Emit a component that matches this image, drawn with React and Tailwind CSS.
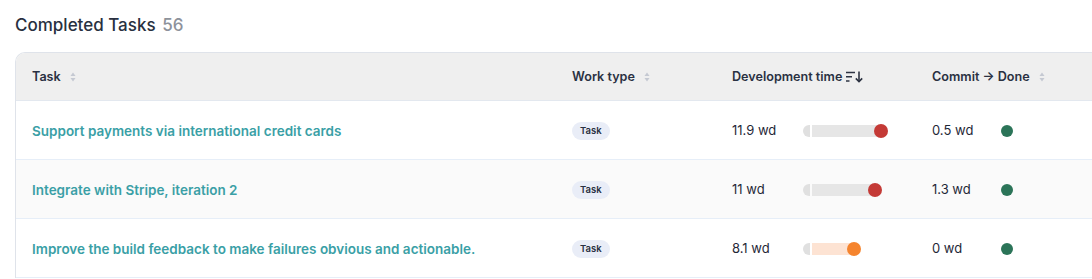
import React from 'react';

const rows = [
  { name: 'Support payments via international credit cards', dev: '11.9 wd', bar: 69, tone: 'red', commit: '0.5 wd', bg: 'bg-white' },
  { name: 'Integrate with Stripe, iteration 2', dev: '11 wd', bar: 63, tone: 'red', commit: '1.3 wd', bg: 'bg-[#fafafa]' },
  { name: 'Improve the build feedback to make failures obvious and actionable.', dev: '8.1 wd', bar: 42, tone: 'orange', commit: '0 wd', bg: 'bg-white' },
];

const SortIcon = () => (
  <svg width="6" height="10" viewBox="0 0 6 10" className="ml-[9px]">
    <path d="M3 0.5 L5.5 4 H0.5 Z" fill="#c5c9d2" />
    <path d="M3 9.5 L5.5 6 H0.5 Z" fill="#c5c9d2" />
  </svg>
);

const SortDesc = () => (
  <svg width="18" height="12" viewBox="0 0 18 12" className="ml-[3px]" fill="none" stroke="#2d3342" strokeWidth="1.6">
    <path d="M1 1.5 H10" />
    <path d="M1 5.8 H7" />
    <path d="M1 10 H4.5" />
    <path d="M14 0.5 V10.5" />
    <path d="M10.8 7.4 L14 10.6 L17.2 7.4" />
  </svg>
);

const Bar = ({ width, tone }) => {
  const dot = tone === 'red' ? 'bg-[#c43a36]' : 'bg-[#f5842e]';
  const fill = tone === 'red' ? 'bg-[#e6e6e6]' : 'bg-[#fde3d3]';
  return (
    <div className="flex items-center ml-[26px]">
      <div className="h-[12px] w-[7px] rounded-l-full bg-[#e0e0e0]" />
      <div className="flex items-center ml-[2px]">
        <div className={`h-[12px] ${fill}`} style={{ width }} />
        <div className={`h-[14px] w-[14px] rounded-full -ml-[7px] ${dot}`} />
      </div>
    </div>
  );
};

export default function App() {
  return (
    <div className="w-[1092px] h-[279px] overflow-hidden bg-white" style={{ fontFamily: 'Inter, "Noto Sans", sans-serif' }}>
      <div className="pl-[15px] pt-[14px] h-[52px]">
        <h2 className="text-[17px] leading-[22px] text-[#283040] font-medium">
          Completed Tasks <span className="text-[#8d929b] ml-[2px]">56</span>
        </h2>
      </div>
      <div className="ml-[15px] w-[1100px] border-l border-t border-[#dfe3ea] rounded-tl-[10px] overflow-hidden">
        <div className="grid grid-cols-[540px_160px_200px_1fr] h-[48px] pt-[1px] bg-[#efefef] border-b border-[#e3e8ef] text-[12.6px] font-semibold text-[#2a3142]">
          <div className="flex items-center pl-[16px]">Task<SortIcon /></div>
          <div className="flex items-center pl-[16px]">Work type<SortIcon /></div>
          <div className="flex items-center pl-[16px]">Development time<SortDesc /></div>
          <div className="flex items-center pl-[16px]">Commit → Done<SortIcon /></div>
        </div>
        {rows.map((r) => (
          <div key={r.name} className={`grid grid-cols-[540px_160px_200px_1fr] h-[59px] pt-[2px] border-b border-[#e6eef8] text-[13px] ${r.bg}`}>
            <div className="flex items-center pl-[16px] font-semibold text-[13.5px] text-[#3a9fa6]">{r.name}</div>
            <div className="flex items-center pl-[16px]">
              <span className="h-[18px] px-[8px] rounded-full bg-[#e9edf7] text-[9.5px] font-semibold text-[#2a3142] flex items-center">Task</span>
            </div>
            <div className="flex items-center pl-[16px] text-[#1f2837]">
              <span className="w-[45px]">{r.dev}</span>
              <Bar width={r.bar} tone={r.tone} />
            </div>
            <div className="flex items-center pl-[16px] text-[#1f2837]">
              <span className="w-[69px]">{r.commit}</span>
              <div className="h-[12px] w-[12px] rounded-full bg-[#2b7458]" />
            </div>
          </div>
        ))}
      </div>
    </div>
  );
}
